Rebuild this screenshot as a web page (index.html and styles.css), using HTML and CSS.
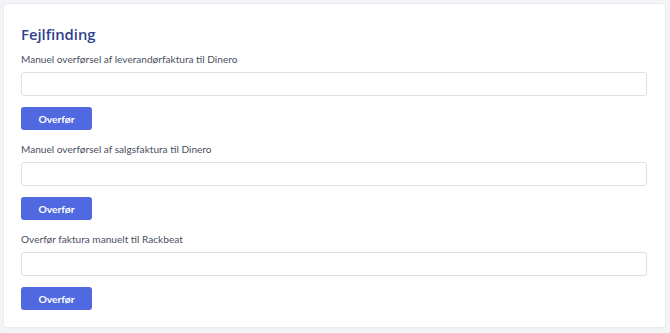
FILE: index.html
```html
<!DOCTYPE html>
<html lang="da">
<head>
<meta charset="utf-8">
<link rel="stylesheet" href="styles.css">
</head>
<body>
<div class="card">
  <h2 class="title">Fejlfinding</h2>
  <div class="group">
    <label class="label">Manuel overførsel af leverandørfaktura til Dinero</label>
    <input class="input" type="text">
    <button class="btn">Overfør</button>
  </div>
  <div class="group">
    <label class="label">Manuel overførsel af salgsfaktura til Dinero</label>
    <input class="input" type="text">
    <button class="btn">Overfør</button>
  </div>
  <div class="group">
    <label class="label">Overfør faktura manuelt til Rackbeat</label>
    <input class="input" type="text">
    <button class="btn">Overfør</button>
  </div>
</div>
</body>
</html>
```
FILE: styles.css
```css
html, body {
  margin: 0;
  padding: 0;
  background: #f3f4f8;
  font-family: "Lato", "Open Sans", sans-serif;
}
body {
  padding: 4px 5px 6px 4px;
}
.card {
  background: #fff;
  border-radius: 3px;
  box-shadow: 0 0 0 1px #ebecf1, 0 1px 2px rgba(0,0,0,0.06);
  padding: 20px 18px 6px 17px;
  display: flex;
  flex-direction: column;
}
.title {
  margin: 0 0 7px;
  font-family: "Open Sans", "Lato", sans-serif;
  font-size: 14.8px;
  line-height: 20px;
  font-weight: 600;
  color: #2f3f8e;
}
.group {
  display: flex;
  flex-direction: column;
  align-items: flex-start;
}
.label {
  font-size: 10.1px;
  line-height: 16px;
  color: #4a4f62;
  margin-bottom: 5px;
}
.input {
  box-sizing: border-box;
  width: 100%;
  height: 24px;
  border: 1px solid #dfe0e6;
  border-radius: 3px;
  margin: 0 0 11px;
  padding: 0 8px;
  outline: none;
  background: #fff;
}
.btn {
  box-sizing: border-box;
  width: 71px;
  height: 23px;
  border: none;
  border-radius: 3px;
  background: #5068e0;
  color: #fff;
  font-family: "Lato", "Open Sans", sans-serif;
  font-weight: 700;
  font-size: 10.3px;
  padding: 0;
  margin-bottom: 11px;
  cursor: pointer;
}
```
